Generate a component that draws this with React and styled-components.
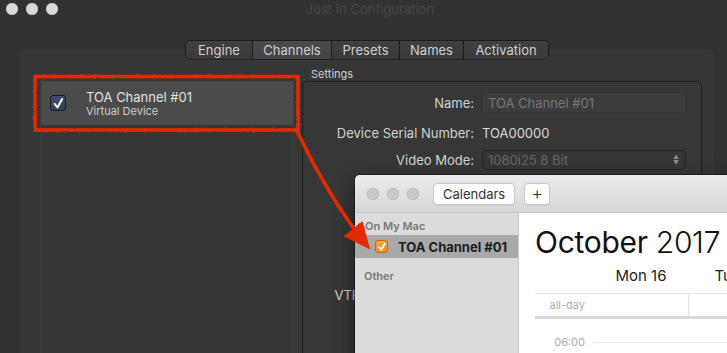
import React from 'react';
import styled, { createGlobalStyle } from 'styled-components';

const GlobalStyle = createGlobalStyle`
    html, body {
        margin: 0;
        padding: 0;
        background: #323232;
    }
    * {
        box-sizing: border-box;
    }
`;

const Desktop = styled.div`
    position: relative;
    width: 727px;
    height: 353px;
    overflow: hidden;
    background: #323232;
    font-family: Inter, "Noto Sans", sans-serif;
`;

const MainWindow = styled.div`
    display: flex;
    flex-direction: column;
    height: 100%;
`;

const TitleBar = styled.div`
    height: 18px;
    display: grid;
    grid-template-columns: 1fr auto 1fr;
    align-items: center;
    padding-left: 6px;
`;

const Lights = styled.div`
    display: flex;
    gap: ${p => p.$gap || 8}px;
`;

const Light = styled.span`
    width: 12px;
    height: 12px;
    border-radius: 50%;
    background: ${p => p.$color};
    box-shadow: inset 0 0 0 0.5px ${p => p.$edge};
`;

const WindowTitle = styled.div`
    font-size: 13px;
    color: #474747;
    padding-left: 7px;
`;

const TabsRow = styled.div`
    position: relative;
    z-index: 1;
    display: flex;
    justify-content: center;
    padding-left: 7px;
    margin-top: 22px;
`;

const Segmented = styled.div`
    display: flex;
    height: 20px;
    border: 1px solid #1c1c1c;
    border-radius: 5px;
    overflow: hidden;
    box-shadow: 0 1px 0 rgba(255, 255, 255, 0.04);
`;

const Tab = styled.div`
    width: ${p => p.$w}px;
    display: flex;
    align-items: center;
    justify-content: center;
    font-size: 13px;
    color: #cfcfcf;
    background: ${p => p.$active
        ? 'linear-gradient(#4a4a4a, #444)'
        : 'linear-gradient(#404040, #393939)'};
    & + & {
        border-left: 1px solid #1c1c1c;
    }
`;

const TabBox = styled.div`
    flex: 1;
    margin: -10px 14px 0 20px;
    background: #363636;
    border: 1px solid #393939;
    border-bottom: none;
    border-radius: 5px 5px 0 0;
    padding: 17px 10px 0 19px;
    display: flex;
    gap: 8px;
`;

const ChannelList = styled.div`
    width: 254px;
    margin-top: 12px;
    border-left: 1px solid #3d3d3d;
    border-right: 1px solid #3d3d3d;
    padding-top: 1px;
`;

const ChannelRow = styled.div`
    height: 44px;
    background: ${p => p.$selected ? '#4b4b4b' : 'transparent'};
    display: flex;
    align-items: center;
    padding-left: 9px;
    gap: 20px;
`;

const DarkCheck = styled.span`
    width: 16px;
    height: 16px;
    border-radius: 3px;
    background: linear-gradient(#3d5070, #2f3f5a);
    border: 1px solid #15191f;
    display: flex;
    align-items: center;
    justify-content: center;
`;

const ChannelText = styled.div`
    display: flex;
    flex-direction: column;
`;

const ChannelName = styled.span`
    font-size: 13px;
    line-height: 16px;
    color: #e2e2e2;
`;

const ChannelSub = styled.span`
    font-size: 11px;
    line-height: 13px;
    color: #cdcdcd;
`;

const SettingsColumn = styled.div`
    width: 400px;
    display: flex;
    flex-direction: column;
`;

const GroupLabel = styled.div`
    font-size: 11px;
    line-height: 13px;
    color: #d0d0d0;
    padding-left: 9px;
`;

const Group = styled.div`
    flex: 1;
    border: 1px solid #1d1d1d;
    border-bottom: none;
    border-radius: 5px 5px 0 0;
    background: #373737;
    padding-top: 10px;
`;

const FormRow = styled.div`
    display: grid;
    grid-template-columns: 171px 204px;
    column-gap: 8px;
    align-items: center;
    height: ${p => p.$h || 20}px;
    margin-top: ${p => p.$gap || 0}px;
`;

const FieldLabel = styled.span`
    text-align: right;
    font-size: 13px;
    color: #d2d2d2;
    white-space: nowrap;
`;

const TextInput = styled.div`
    height: 100%;
    background: #3c3c3c;
    border: 1px solid #343434;
    border-radius: 3px;
    font-size: 13px;
    color: #777;
    display: flex;
    align-items: center;
    padding-left: 5px;
`;

const Value = styled.span`
    font-size: 13px;
    color: #dadada;
`;

const Select = styled(TextInput)`
    background: #363636;
    border-color: #232323;
    border-radius: 4px;
    color: #676767;
    justify-content: space-between;
    padding-right: 6px;
`;

const Stepper = styled.span`
    display: flex;
    flex-direction: column;
    font-size: 6px;
    line-height: 6px;
    color: #8a8a8a;
`;

/* Calendar window sitting on top */
const CalendarWindow = styled.div`
    position: absolute;
    left: 355px;
    top: 175px;
    width: 420px;
    height: 200px;
    border-radius: 5px 0 0 0;
    background: #fff;
    overflow: hidden;
    display: flex;
    flex-direction: column;
    box-shadow: 0 0 0 1px rgba(0, 0, 0, 0.35), -2px 6px 20px rgba(0, 0, 0, 0.45);
`;

const CalToolbar = styled.div`
    height: 38px;
    flex-shrink: 0;
    background: linear-gradient(#ececec, #d6d6d6);
    border-bottom: 1px solid #c3c3c3;
    display: flex;
    align-items: center;
    padding-left: 12px;
`;

const ToolButton = styled.div`
    height: 22px;
    margin-left: ${p => p.$gap}px;
    padding: 0 ${p => p.$pad}px;
    background: #fff;
    border: 1px solid #c9c9c9;
    border-radius: 4px;
    box-shadow: 0 0.5px 0 rgba(0, 0, 0, 0.1);
    font-size: ${p => p.$size || 13}px;
    font-weight: ${p => p.$light ? 300 : 400};
    color: #333;
    display: flex;
    align-items: center;
`;

const CalBody = styled.div`
    flex: 1;
    display: flex;
`;

const Sidebar = styled.div`
    width: 164px;
    flex-shrink: 0;
    background: #dcdcdc;
    border-right: 1px solid #c8c8c8;
    padding-top: 6px;
`;

const SideHeading = styled.div`
    font-size: 11px;
    line-height: 14px;
    font-weight: 600;
    color: #777;
    padding-left: ${p => p.$indent || 10}px;
    margin-top: ${p => p.$gap || 0}px;
`;

const SideRow = styled.div`
    height: 23px;
    margin-top: 2px;
    background: #a9a9a9;
    display: flex;
    align-items: center;
    padding-left: 20px;
    gap: 10px;
`;

const OrangeCheck = styled.span`
    width: 13px;
    height: 13px;
    border-radius: 3px;
    background: linear-gradient(#f5aa45, #ec8f22);
    border: 1px solid #c06c12;
    display: flex;
    align-items: center;
    justify-content: center;
`;

const SideRowText = styled.span`
    font-size: 13px;
    font-weight: 700;
    color: #1b1b1b;
`;

const CalMain = styled.div`
    flex: 1;
    min-width: 0;
    padding-left: 16px;
    display: flex;
    flex-direction: column;
`;

const MonthTitle = styled.div`
    margin-top: 12px;
    font-size: 30px;
    line-height: 34px;
    color: #111;
    white-space: nowrap;
    letter-spacing: -0.3px;
`;

const Year = styled.span`
    font-weight: 300;
`;

const DayHeader = styled.div`
    display: flex;
    margin-top: 7px;
    height: 18px;
    align-items: center;
`;

const Gutter = styled.div`
    width: 58px;
    flex-shrink: 0;
    text-align: right;
    padding-right: 8px;
    font-size: 11px;
    color: #ababab;
`;

const DayName = styled.div`
    width: 96px;
    flex-shrink: 0;
    text-align: center;
    font-size: 15px;
    color: #222;
    white-space: nowrap;
`;

const AllDayRow = styled.div`
    display: flex;
    margin-top: 9px;
    height: 26px;
    border-top: 1px solid #e2e2e2;
    border-bottom: 3px solid #d8d8d8;
    align-items: center;
`;

const DayCell = styled.div`
    width: 96px;
    flex-shrink: 0;
    align-self: stretch;
    border-right: ${p => p.$line ? '1px solid #e2e2e2' : 'none'};
`;

const HourRow = styled.div`
    display: flex;
    align-items: center;
    margin-top: 16px;
    height: 14px;
`;

const HourLine = styled.div`
    flex: 1;
    height: 1px;
    background: #e6e6e6;
`;

const Annotation = styled.svg`
    position: absolute;
    inset: 0;
    pointer-events: none;
    z-index: 10;
`;

const CheckMark = ({ size, color, width }) => (
    <svg width={size} height={size} viewBox="0 0 10 10">
        <path d="M2 5.3 L4.2 8 L7.8 1.6" fill="none" stroke={color} strokeWidth={width} strokeLinecap="round" strokeLinejoin="round" />
    </svg>
);

const tabs = [
    { label: 'Engine', w: 66 },
    { label: 'Channels', w: 79, active: true },
    { label: 'Presets', w: 68 },
    { label: 'Names', w: 64 },
    { label: 'Activation', w: 85 },
];

const App = () => (
    <Desktop>
        <GlobalStyle />
        <MainWindow>
            <TitleBar>
                <Lights>
                    <Light $color="#d9d9d9" $edge="#bcbcbc" />
                    <Light $color="#d9d9d9" $edge="#bcbcbc" />
                    <Light $color="#d9d9d9" $edge="#bcbcbc" />
                </Lights>
                <WindowTitle>Just In Configuration</WindowTitle>
                <span />
            </TitleBar>
            <TabsRow>
                <Segmented>
                    {tabs.map(t => (
                        <Tab key={t.label} $w={t.w} $active={t.active}>{t.label}</Tab>
                    ))}
                </Segmented>
            </TabsRow>
            <TabBox>
                <ChannelList>
                    <ChannelRow $selected>
                        <DarkCheck><CheckMark size={13} color="#fff" width={1.5} /></DarkCheck>
                        <ChannelText>
                            <ChannelName>TOA Channel #01</ChannelName>
                            <ChannelSub>Virtual Device</ChannelSub>
                        </ChannelText>
                    </ChannelRow>
                </ChannelList>
                <SettingsColumn>
                    <GroupLabel>Settings</GroupLabel>
                    <Group>
                        <FormRow $h={21}>
                            <FieldLabel>Name:</FieldLabel>
                            <TextInput>TOA Channel #01</TextInput>
                        </FormRow>
                        <FormRow $gap={10}>
                            <FieldLabel>Device Serial Number:</FieldLabel>
                            <Value>TOA00000</Value>
                        </FormRow>
                        <FormRow $gap={7}>
                            <FieldLabel>Video Mode:</FieldLabel>
                            <Select>
                                <span>1080i25 8 Bit</span>
                                <Stepper><span>▲</span><span>▼</span></Stepper>
                            </Select>
                        </FormRow>
                        <FormRow $gap={115}>
                            <FieldLabel>VTR Control Protocols:</FieldLabel>
                            <span />
                        </FormRow>
                    </Group>
                </SettingsColumn>
            </TabBox>
        </MainWindow>

        <CalendarWindow>
            <CalToolbar>
                <Lights>
                    <Light $color="#c9c9c9" $edge="#b0b0b0" />
                    <Light $color="#c9c9c9" $edge="#b0b0b0" />
                    <Light $color="#c9c9c9" $edge="#b0b0b0" />
                </Lights>
                <ToolButton $gap={14} $pad={9}>Calendars</ToolButton>
                <ToolButton $gap={9} $pad={6} $size={18} $light>+</ToolButton>
            </CalToolbar>
            <CalBody>
                <Sidebar>
                    <SideHeading>On My Mac</SideHeading>
                    <SideRow>
                        <OrangeCheck><CheckMark size={10} color="#fff" width={1.7} /></OrangeCheck>
                        <SideRowText>TOA Channel #01</SideRowText>
                    </SideRow>
                    <SideHeading $gap={11} $indent={9}>Other</SideHeading>
                </Sidebar>
                <CalMain>
                    <MonthTitle>October <Year>2017</Year></MonthTitle>
                    <DayHeader>
                        <Gutter />
                        <DayName>Mon 16</DayName>
                        <DayName>Tue 17</DayName>
                    </DayHeader>
                    <AllDayRow>
                        <Gutter>all-day</Gutter>
                        <DayCell $line />
                        <DayCell />
                    </AllDayRow>
                    <HourRow>
                        <Gutter>06:00</Gutter>
                        <HourLine />
                    </HourRow>
                </CalMain>
            </CalBody>
        </CalendarWindow>

        <Annotation width="727" height="353" viewBox="0 0 727 353">
            <defs>
                <filter id="rough" x="-5%" y="-5%" width="110%" height="110%">
                    <feTurbulence type="fractalNoise" baseFrequency="0.9" numOctaves="2" seed="3" />
                    <feDisplacementMap in="SourceGraphic" scale="2.2" />
                </filter>
            </defs>
            <g filter="url(#rough)" fill="none" stroke="#e22c00" strokeWidth="3.6" strokeLinejoin="miter">
                <rect x="35" y="76.5" width="263" height="53.5" />
                <path d="M297 131 Q322 184 354 229" strokeLinecap="round" />
                <polygon points="345,236 362,222 369,248" fill="#e22c00" strokeWidth="1.5" />
            </g>
        </Annotation>
    </Desktop>
);

export default App;
